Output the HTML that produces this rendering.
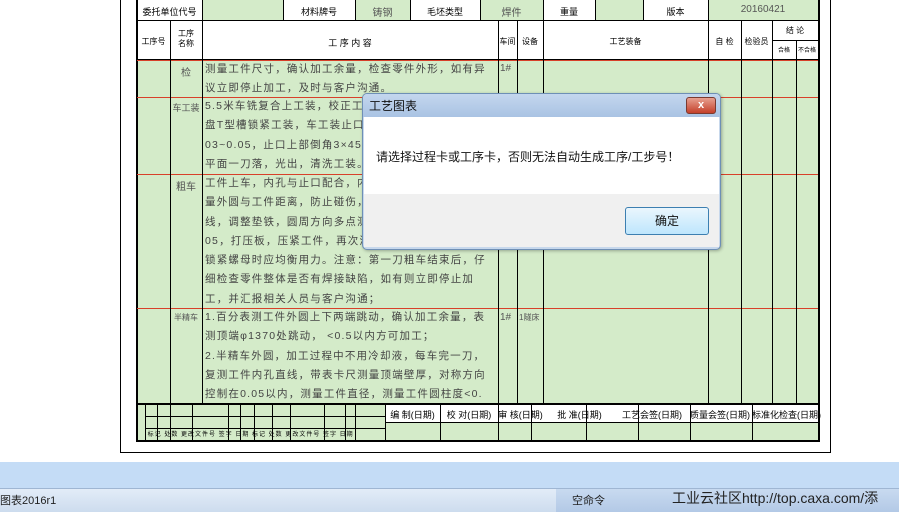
<!DOCTYPE html>
<html><head><meta charset="utf-8"><style>
*{margin:0;padding:0;box-sizing:border-box}
body{width:899px;height:512px;overflow:hidden;background:#fff;position:relative;font-family:"Liberation Sans","Noto Sans CJK SC",sans-serif;}
.a{position:absolute}
.g{background:#d4ebc9}
.t{position:absolute;font-size:9px;color:#000;text-align:center;white-space:nowrap;font-family:"Liberation Sans","WenQuanYi Zen Hei",sans-serif}
.v{position:absolute;width:1px;background:#000}
.h{position:absolute;height:1px;background:#000}
.r{position:absolute;height:1px;background:#d8402a}
.c{position:absolute;font-size:10.5px;line-height:19.3px;color:#444;font-family:"Liberation Sans","WenQuanYi Zen Hei",sans-serif;letter-spacing:1.2px;white-space:nowrap;overflow:hidden}
</style></head><body>
<div class="a" style="left:120px;top:0;width:711px;height:453px;border:1px solid #000;border-top:none"></div>
<div class="a g" style="left:137px;top:60px;width:681px;height:380px"></div>
<div class="a" style="left:137px;top:20px;width:681px;height:40px;background:#fff"></div>
<div class="a" style="left:137px;top:0;width:681px;height:20px;background:#fff"></div>
<div class="a g" style="left:202px;top:0;width:81px;height:20px"></div>
<div class="a g" style="left:355px;top:0;width:55px;height:20px"></div>
<div class="a g" style="left:480px;top:0;width:63px;height:20px"></div>
<div class="a g" style="left:595px;top:0;width:48px;height:20px"></div>
<div class="a g" style="left:708px;top:0;width:110px;height:20px"></div>
<div class="a" style="left:385px;top:422px;width:433px;height:18px;background:#d4ebc9"></div>
<div class="a" style="left:385px;top:404px;width:433px;height:18px;background:#fff"></div>
<div class="a" style="left:136px;top:0;width:684px;height:442px;border:2px solid #000;border-top:none"></div>
<div class="h" style="left:137px;top:20px;width:681px"></div>
<div class="h" style="left:137px;top:59px;width:681px"></div>
<div class="r" style="left:137px;top:60px;width:681px"></div>
<div class="r" style="left:137px;top:97px;width:681px"></div>
<div class="r" style="left:137px;top:174px;width:681px"></div>
<div class="r" style="left:137px;top:308px;width:681px"></div>
<div class="h" style="left:137px;top:403px;width:681px;height:2px"></div>
<div class="v" style="left:202px;top:0;height:20px"></div>
<div class="v" style="left:283px;top:0;height:20px"></div>
<div class="v" style="left:355px;top:0;height:20px"></div>
<div class="v" style="left:410px;top:0;height:20px"></div>
<div class="v" style="left:480px;top:0;height:20px"></div>
<div class="v" style="left:543px;top:0;height:20px"></div>
<div class="v" style="left:595px;top:0;height:20px"></div>
<div class="v" style="left:643px;top:0;height:20px"></div>
<div class="v" style="left:708px;top:0;height:20px"></div>
<div class="v" style="left:170px;top:20px;height:384px"></div>
<div class="v" style="left:202px;top:20px;height:384px"></div>
<div class="v" style="left:498px;top:20px;height:384px"></div>
<div class="v" style="left:517px;top:20px;height:384px"></div>
<div class="v" style="left:543px;top:20px;height:384px"></div>
<div class="v" style="left:708px;top:20px;height:384px"></div>
<div class="v" style="left:741px;top:20px;height:384px"></div>
<div class="v" style="left:772px;top:20px;height:384px"></div>
<div class="v" style="left:796px;top:40px;height:364px"></div>
<div class="h" style="left:772px;top:40px;width:46px"></div>
<div class="h" style="left:145px;top:416px;width:240px"></div>
<div class="h" style="left:145px;top:428px;width:240px"></div>
<div class="h" style="left:385px;top:422px;width:433px"></div>
<div class="v" style="left:145px;top:404px;height:36px"></div>
<div class="v" style="left:157px;top:404px;height:36px"></div>
<div class="v" style="left:170px;top:404px;height:36px"></div>
<div class="v" style="left:192px;top:404px;height:36px"></div>
<div class="v" style="left:228px;top:404px;height:36px"></div>
<div class="v" style="left:240px;top:404px;height:36px"></div>
<div class="v" style="left:254px;top:404px;height:36px"></div>
<div class="v" style="left:272px;top:404px;height:36px"></div>
<div class="v" style="left:290px;top:404px;height:36px"></div>
<div class="v" style="left:324px;top:404px;height:36px"></div>
<div class="v" style="left:345px;top:404px;height:36px"></div>
<div class="v" style="left:355px;top:404px;height:36px"></div>
<div class="v" style="left:385px;top:404px;height:36px"></div>
<div class="v" style="left:440px;top:404px;height:36px"></div>
<div class="v" style="left:498px;top:404px;height:36px"></div>
<div class="v" style="left:531px;top:404px;height:36px"></div>
<div class="v" style="left:586px;top:404px;height:36px"></div>
<div class="v" style="left:638px;top:404px;height:36px"></div>
<div class="v" style="left:690px;top:404px;height:36px"></div>
<div class="v" style="left:752px;top:404px;height:36px"></div>
<div class="t" style="left:137px;top:5px;width:65px">委托单位代号</div>
<div class="t" style="left:283px;top:5px;width:72px">材料牌号</div>
<div class="t" style="left:355px;top:4px;width:55px;font-size:10px;color:#555">铸钢</div>
<div class="t" style="left:410px;top:5px;width:70px">毛坯类型</div>
<div class="t" style="left:480px;top:4px;width:63px;font-size:10px;color:#555">焊件</div>
<div class="t" style="left:543px;top:5px;width:52px">重量</div>
<div class="t" style="left:643px;top:5px;width:65px">版本</div>
<div class="t" style="left:708px;top:4px;width:110px;font-size:10px;color:#555">20160421</div>
<div class="t" style="left:137px;top:36px;width:33px;font-size:8px">工序号</div>
<div class="t" style="left:170px;top:29px;width:32px;font-size:8px;line-height:10px">工序<br>名称</div>
<div class="t" style="left:202px;top:36px;width:296px">工 序 内 容</div>
<div class="t" style="left:498px;top:36px;width:19px;font-size:8px">车间</div>
<div class="t" style="left:517px;top:36px;width:26px;font-size:8px">设备</div>
<div class="t" style="left:543px;top:36px;width:165px;font-size:8px">工艺装备</div>
<div class="t" style="left:708px;top:36px;width:33px;font-size:8px">自 检</div>
<div class="t" style="left:741px;top:36px;width:31px;font-size:8px">检验员</div>
<div class="t" style="left:772px;top:25px;width:46px;font-size:8px">结 论</div>
<div class="t" style="left:772px;top:45px;width:24px;font-size:6px">合格</div>
<div class="t" style="left:796px;top:45px;width:22px;font-size:6px">不合格</div>
<div class="t" style="left:170px;top:64px;width:32px;font-size:10px;color:#555">检</div>
<div class="t" style="left:170px;top:101px;width:32px;font-size:9px;color:#555">车工装</div>
<div class="t" style="left:170px;top:178px;width:32px;font-size:10px;color:#555">粗车</div>
<div class="t" style="left:170px;top:312px;width:32px;font-size:8px;color:#555">半精车</div>
<div class="t" style="left:500px;top:63px;font-size:10px;color:#555">1#</div>
<div class="t" style="left:500px;top:312px;font-size:10px;color:#555">1#</div>
<div class="t" style="left:519px;top:312px;font-size:8px;color:#555">1隧床</div>
<div class="c" style="left:205px;top:60px;width:292px">测量工件尺寸，确认加工余量，检查零件外形，如有异<br>议立即停止加工，及时与客户沟通。</div>
<div class="c" style="left:205px;top:97px;width:292px">5.5米车铣复合上工装，校正工装，用三爪卡盘<br>盘T型槽锁紧工装，车工装止口，保证跳动0.<br>03~0.05，止口上部倒角3×45°，工装端面<br>平面一刀落，光出，清洗工装。</div>
<div class="c" style="left:205px;top:174px;width:292px">工件上车，内孔与止口配合，内孔向外测<br>量外圆与工件距离，防止碰伤，找正划<br>线，调整垫铁，圆周方向多点测量跳动0.<br>05，打压板，压紧工件，再次测量跳动，<br>锁紧螺母时应均衡用力。注意：第一刀粗车结束后，仔<br>细检查零件整体是否有焊接缺陷，如有则立即停止加<br>工，并汇报相关人员与客户沟通；</div>
<div class="c" style="left:205px;top:308px;width:292px">1.百分表测工件外圆上下两端跳动，确认加工余量，表<br>测顶端φ1370处跳动， &lt;0.5以内方可加工；<br>2.半精车外圆，加工过程中不用冷却液，每车完一刀，<br>复测工件内孔直线，带表卡尺测量顶端壁厚，对称方向<br>控制在0.05以内，测量工件直径，测量工件圆柱度&lt;0.</div>
<div class="t" style="left:385px;top:408px;width:55px">编 制(日期)</div>
<div class="t" style="left:440px;top:408px;width:58px">校 对(日期)</div>
<div class="t" style="left:498px;top:408px;width:45px">审 核(日期)</div>
<div class="t" style="left:543px;top:408px;width:73px">批 准(日期)</div>
<div class="t" style="left:616px;top:408px;width:72px">工艺会签(日期)</div>
<div class="t" style="left:688px;top:408px;width:64px">质量会签(日期)</div>
<div class="t" style="left:752px;top:408px;width:66px">标准化检查(日期)</div>
<div class="t" style="left:145px;top:429px;width:240px;font-size:6px;text-align:left;letter-spacing:1px">&nbsp;标记 处数 更改文件号 签字 日期 标记 处数 更改文件号 签字 日期</div>
<div class="a" style="left:0;top:462px;width:899px;height:27px;background:#c4dcf6"></div>
<div class="a" style="left:0;top:488px;width:899px;height:24px;background:linear-gradient(#e2ecf8,#cddcee);border-top:1px solid #9fb6d3"></div>
<div class="a" style="left:556px;top:489px;width:343px;height:23px;background:linear-gradient(#c8daf0,#b3c9e6)"></div>
<div class="a" style="left:0;top:492px;font-size:11px;color:#222">图表2016r1</div>
<div class="a" style="left:572px;top:492px;font-size:11px;color:#222">空命令</div>
<div class="a" style="left:672px;top:488px;font-size:14px;color:#222">工业云社区http://top.caxa.com/添</div>
<div class="a" style="left:362px;top:93px;width:359px;height:157px;border:1px solid #6e8fb5;border-radius:5px;background:#c7d8ec;box-shadow:1px 1px 3px rgba(0,0,0,.3)"></div>
<div class="a" style="left:363px;top:94px;width:357px;height:23px;background:linear-gradient(#c4d6ee,#a9c3e3);border-radius:4px 4px 0 0"></div>
<div class="a" style="left:369px;top:97px;font-size:12px;color:#111">工艺图表</div>
<div class="a" style="left:686px;top:97px;width:30px;height:17px;border:1px solid #7a3a30;border-radius:3px;background:linear-gradient(#e7a090,#c4402a);color:#fff;font-size:11px;font-weight:bold;text-align:center;line-height:15px">x</div>
<div class="a" style="left:364px;top:117px;width:355px;height:77px;background:#fff"></div>
<div class="a" style="left:364px;top:194px;width:355px;height:53px;background:#f0f0f0"></div>
<div class="a" style="left:376px;top:148px;font-size:12px;color:#111">请选择过程卡或工序卡，否则无法自动生成工序/工步号！</div>
<div class="a" style="left:625px;top:207px;width:84px;height:28px;border:1px solid #3c7fb1;border-radius:3px;background:linear-gradient(#eaf6fd,#bee6fd);font-size:12px;text-align:center;line-height:26px;color:#111">确定</div>
</body></html>
